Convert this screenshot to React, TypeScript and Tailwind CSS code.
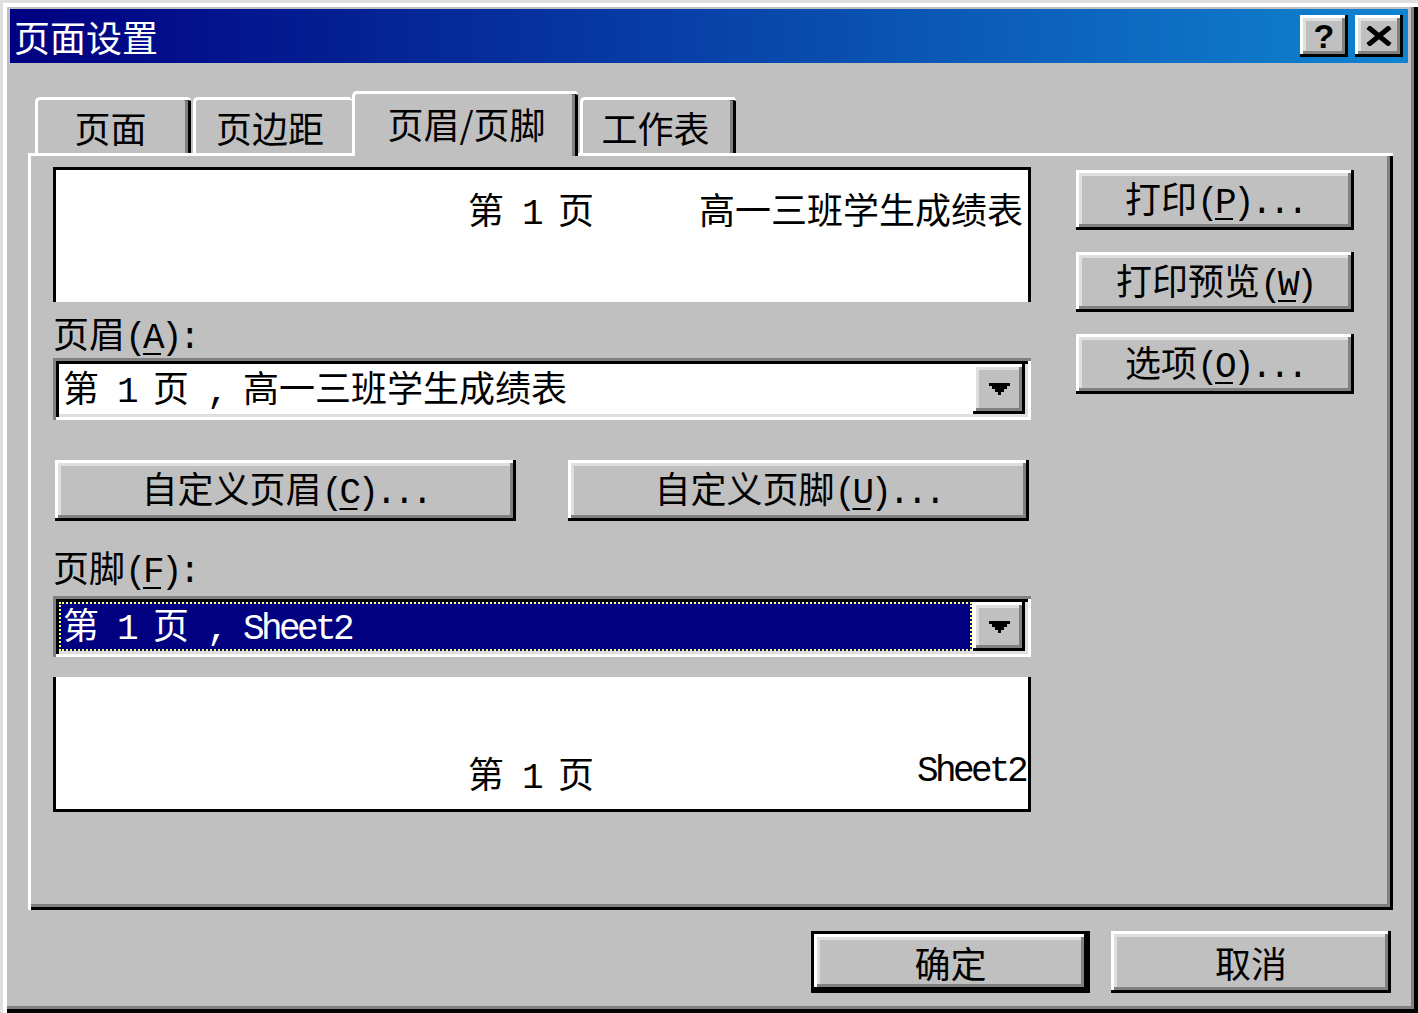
import type { ReactNode } from "react";

// win98 bevels, scaled 3x
const raised =
  "shadow-[inset_-3px_-3px_0_#000000,inset_3px_3px_0_#ffffff,inset_-6px_-6px_0_#808080,inset_6px_6px_0_#dfdfdf]";
const sunken =
  "shadow-[inset_3px_3px_0_#808080,inset_-3px_-3px_0_#ffffff,inset_6px_6px_0_#000000,inset_-6px_-6px_0_#dfdfdf]";

function M({ children }: { children: ReactNode }) {
  return (
    <span className="whitespace-pre font-['Liberation_Mono',monospace] text-[36px] tracking-[-3.6px]">
      {children}
    </span>
  );
}

function Key({ k }: { k: string }) {
  return <span className="underline decoration-2 underline-offset-[5px]">{k}</span>;
}

function Button({ children, className = "" }: { children: ReactNode; className?: string }) {
  return (
    <div className={`flex items-center justify-center bg-[#c0c0c0] ${raised} ${className}`}>
      <span className="whitespace-pre text-[36px] leading-none text-black">{children}</span>
    </div>
  );
}

function Arrow() {
  return (
    <svg width="21" height="12" viewBox="0 0 21 12">
      <rect x="0" y="0" width="21" height="3" fill="#000" />
      <rect x="3" y="3" width="15" height="3" fill="#000" />
      <rect x="6" y="6" width="9" height="3" fill="#000" />
      <rect x="9" y="9" width="3" height="3" fill="#000" />
    </svg>
  );
}

function Combo({ children, selected = false, className = "" }: { children: ReactNode; selected?: boolean; className?: string }) {
  return (
    <div className={`flex items-stretch bg-white p-[6px] ${sunken} ${className}`}>
      <div className="flex flex-1 items-center">
        {selected ? (
          <div className="my-[3px] mr-[1px] flex h-full flex-1 items-center border-2 border-dotted border-[#ffff80] bg-[#000080] pl-[2px] text-white">
            <span className="whitespace-pre text-[36px] leading-none">{children}</span>
          </div>
        ) : (
          <span className="whitespace-pre pl-[4px] text-[36px] leading-none text-black">{children}</span>
        )}
      </div>
      <div className={`flex w-[52px] items-center justify-center bg-[#c0c0c0] ${raised}`}>
        <Arrow />
      </div>
    </div>
  );
}

function Tab({ label, active = false, edge = true, className = "" }: { label: string; active?: boolean; edge?: boolean; className?: string }) {
  return (
    <div
      className={`flex items-center justify-center rounded-tl-[5px] rounded-tr-[4px] border-l-[3px] border-t-[3px] border-white bg-[#c0c0c0] ${
        edge ? "shadow-[inset_-3px_0_0_#000000,inset_-6px_0_0_#808080]" : ""
      } ${active ? "relative z-10 -mb-[3px] h-[65px] pb-[4px]" : "h-[56px] pr-[8px]"} ${className}`}
    >
      <span className="whitespace-pre text-[36px] leading-none text-black">{label}</span>
    </div>
  );
}

export default function App() {
  return (
    <div
      className={`flex h-[1013px] w-[1418px] flex-col bg-[#c0c0c0] px-[10px] pt-[9px] font-['Noto_Sans_CJK_SC',sans-serif] shadow-[inset_3px_3px_0_#dfdfdf,inset_7px_7px_0_#ffffff,inset_-4px_-4px_0_#000000,inset_-7px_-7px_0_#808080]`}
    >
      {/* title bar */}
      <div className="flex h-[54px] items-center justify-between bg-[linear-gradient(to_right,#000080,#1084d0)] pl-[4px] pr-[5px]">
        <span className="text-[36px] leading-none text-white">页面设置</span>
        <div className="flex gap-[7px]">
          <div className={`flex h-[42px] w-[48px] items-center justify-center bg-[#c0c0c0] ${raised}`}>
            <span className="font-['Liberation_Sans',sans-serif] text-[34px] font-bold leading-none text-black">?</span>
          </div>
          <div className={`flex h-[42px] w-[48px] items-center justify-center bg-[#c0c0c0] ${raised}`}>
            <svg width="26" height="20" viewBox="0 0 26 20">
              <path d="M2 1 L24 19 M24 1 L2 19" stroke="#000" strokeWidth="5" />
            </svg>
          </div>
        </div>
      </div>

      <div className="ml-[18px] mt-[28px] w-[1365px]">
        {/* tabs */}
        <div className="flex h-[62px] items-end pl-[7px]">
          <Tab label="页面" className="w-[156px]" />
          <Tab label="页边距" edge={false} className="ml-[2px] w-[159px]" />
          <Tab label="页眉/页脚" active className="w-[226px]" />
          <Tab label="工作表" className="ml-[2px] w-[156px]" />
        </div>

        {/* panel */}
        <div className="flex h-[757px] bg-[#c0c0c0] pl-[25px] pt-[14px] shadow-[inset_3px_3px_0_#ffffff,inset_-3px_-3px_0_#000000,inset_-6px_-6px_0_#808080]">
          <div className="flex w-[978px] flex-col">
            <div className="flex h-[135px] items-start border-x-[3px] border-t-[3px] border-black bg-white pt-[20px] pr-[5px]">
              <span className="ml-[412px] whitespace-pre text-[36px] leading-none text-black">
                第<M> 1 </M>页
              </span>
              <span className="ml-auto text-[36px] leading-none text-black">高一三班学生成绩表</span>
            </div>

            <div className="mt-[12px] h-[36px] text-[36px] leading-none text-black">
              页眉<M>(<Key k="A" />):</M>
            </div>
            <Combo className="mt-[8px] h-[62px]">
              第<M> 1 </M>页<M> , </M>高一三班学生成绩表
            </Combo>

            <div className="mt-[40px] flex justify-between px-[2px]">
              <Button className="h-[61px] w-[461px]">
                自定义页眉<M>(<Key k="C" />)...</M>
              </Button>
              <Button className="h-[61px] w-[461px]">
                自定义页脚<M>(<Key k="U" />)...</M>
              </Button>
            </div>

            <div className="mt-[27px] h-[36px] text-[36px] leading-none text-black">
              页脚<M>(<Key k="F" />):</M>
            </div>
            <Combo selected className="mt-[12px] h-[61px]">
              第<M> 1 </M>页<M> , Sheet2</M>
            </Combo>

            <div className="mt-[20px] flex h-[135px] items-start border-x-[3px] border-b-[3px] border-black bg-white pt-[77px] pr-[3px]">
              <span className="ml-[412px] whitespace-pre text-[36px] leading-none text-black">
                第<M> 1 </M>页
              </span>
              <span className="ml-auto leading-none text-black">
                <M>Sheet2</M>
              </span>
            </div>
          </div>

          <div className="ml-[45px] mt-[3px] flex w-[278px] flex-col gap-[22px]">
            <Button className="h-[60px]">
              打印<M>(<Key k="P" />)...</M>
            </Button>
            <Button className="h-[60px]">
              打印预览<M>(<Key k="W" />)</M>
            </Button>
            <Button className="h-[60px]">
              选项<M>(<Key k="O" />)...</M>
            </Button>
          </div>
        </div>
      </div>

      {/* bottom buttons */}
      <div className="mt-[21px] flex justify-end gap-[21px] pr-[17px]">
        <div className="h-[62px] w-[279px] border-[3px] border-black">
          <Button className="h-full w-full">确定</Button>
        </div>
        <Button className="h-[62px] w-[280px]">取消</Button>
      </div>
    </div>
  );
}
